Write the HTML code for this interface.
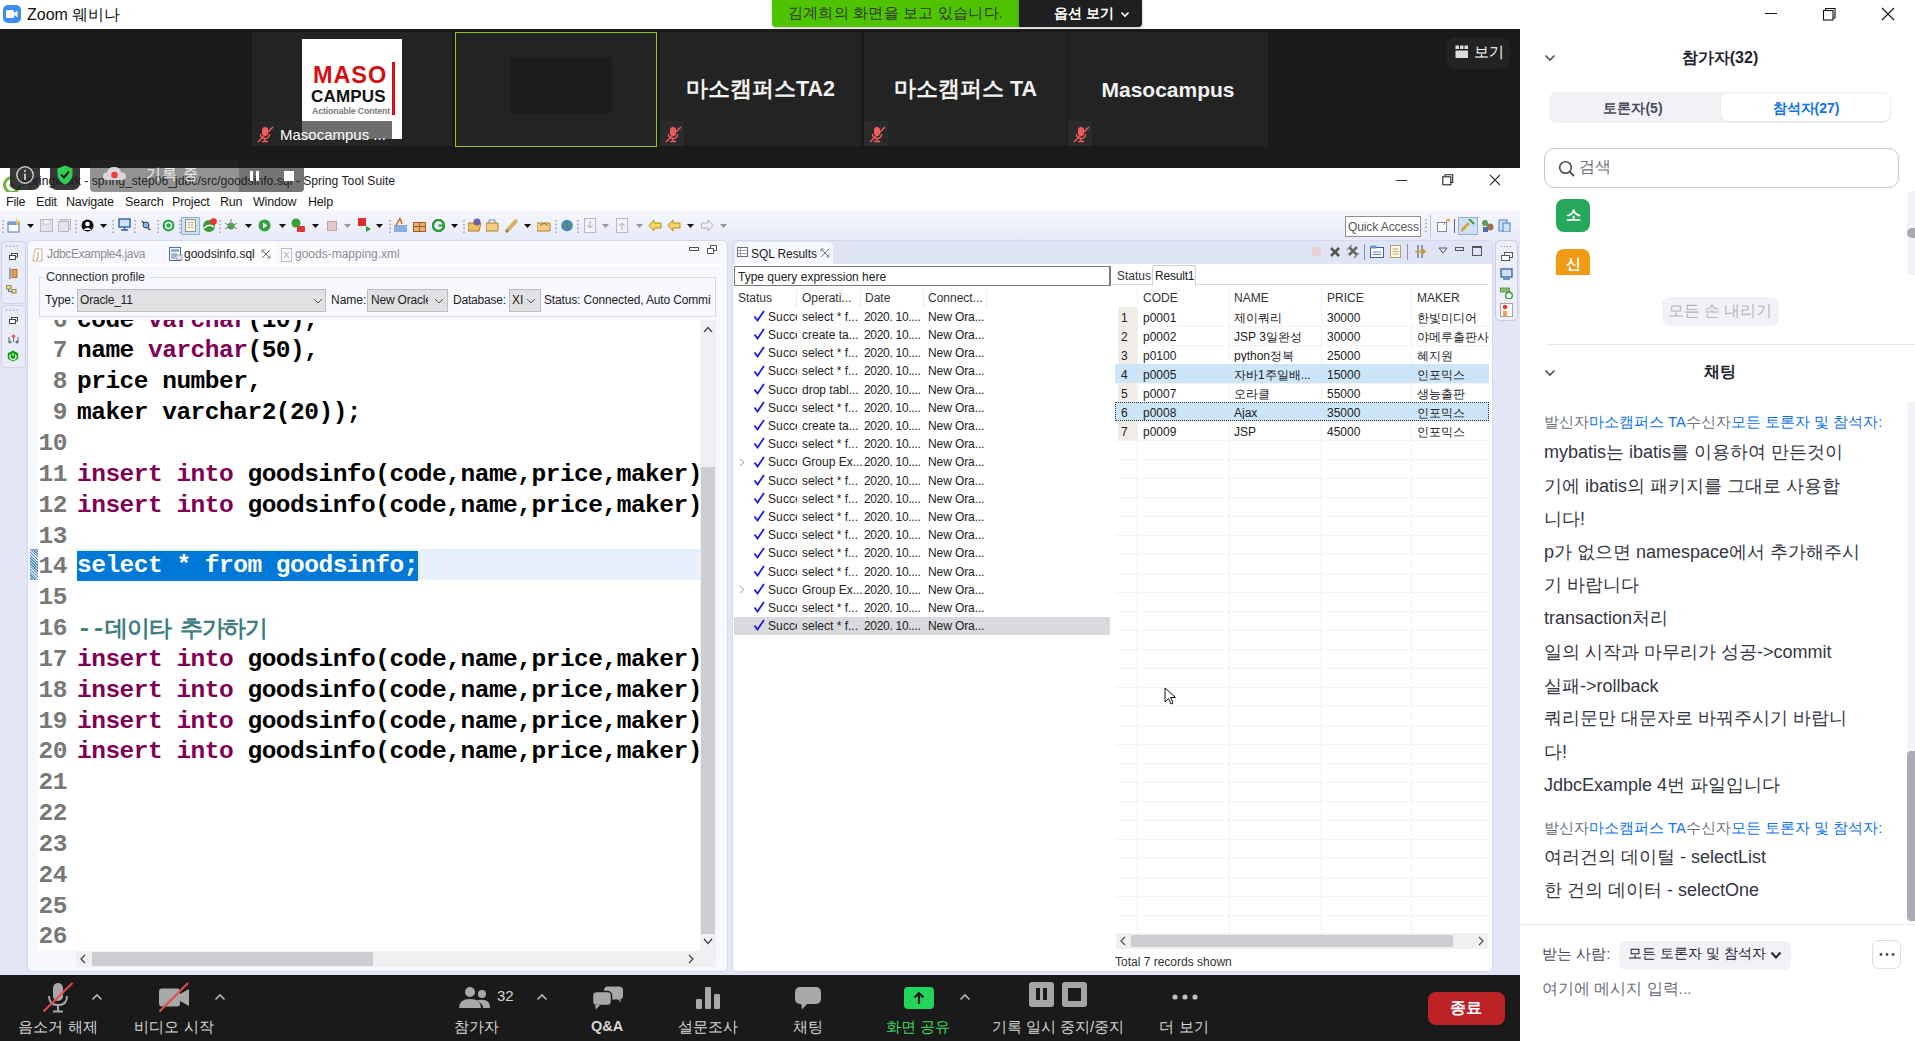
<!DOCTYPE html>
<html><head><meta charset="utf-8">
<style>
*{margin:0;padding:0;box-sizing:border-box}
html,body{width:1915px;height:1041px;overflow:hidden;background:#fff;font-family:"Liberation Sans",sans-serif;position:relative}
.a{position:absolute}
.t{position:absolute;white-space:nowrap}
/* title bar */
#title{left:0;top:0;width:1915px;height:29px;background:#fff}
/* video strip */
#strip{left:0;top:29px;width:1520px;height:139px;background:#1a1a1a}
.tile{position:absolute;top:3px;height:114px;background:#232323}
.mic{position:absolute;left:0;bottom:0;width:24px;height:25px;background:#2b2b2b}
.tname{position:absolute;left:0;right:0;top:44px;text-align:center;color:#f2f2f2;font-weight:bold;font-size:21px}
/* eclipse */
#ecl{left:0;top:168px;width:1520px;height:807px;background:#f5f6fb}
/* zoom bottom toolbar */
#zbar{left:0;top:975px;width:1520px;height:66px;background:#1a1a1a}
.zb{position:absolute;top:50px;color:#d8d8d8;font-size:15px;text-align:center;transform:translateX(-50%)}
/* right panel */
#rp{left:1520px;top:29px;width:395px;height:1012px;background:#fff}
.cl{position:absolute;left:0;height:31px;line-height:31px;white-space:pre;font-family:"Liberation Mono",monospace;font-weight:bold;font-size:24.5px;letter-spacing:-0.5px;color:#000}
.ln{position:absolute;left:0;width:37px;text-align:right;color:#787878}
.cx{position:absolute;left:47px}
</style></head><body>
<div id="title" class="a">
  <div class="a" style="left:3px;top:5px;width:18px;height:18px;border-radius:5px;background:#3a8cf8"></div>
  <svg class="a" style="left:6px;top:10px" width="12" height="8"><rect x="0" y="0" width="8" height="8" rx="1.5" fill="#fff"/><path d="M8 3 L11.5 0.5 V7.5 L8 5 Z" fill="#fff"/></svg>
  <div class="t" style="left:27px;top:5px;font-size:16px;color:#111">Zoom 웨비나</div>

  <div class="a" style="left:1765px;top:13px;width:12px;height:1.2px;background:#111"></div>
  <svg class="a" style="left:1822px;top:7px" width="15" height="14"><path d="M3.5 3.5 V1.5 H13 V11 H11" stroke="#111" stroke-width="1.1" fill="none"/><rect x="1.5" y="3.5" width="9.5" height="9.5" stroke="#111" stroke-width="1.1" fill="none"/></svg>
  <svg class="a" style="left:1881px;top:7px" width="14" height="14"><path d="M1 1L13 13M13 1L1 13" stroke="#111" stroke-width="1.1"/></svg>
  <div class="a" style="left:772px;top:0;width:247px;height:27px;background:#4ec300;border-radius:0 0 0 4px;box-shadow:0 1px 3px rgba(0,0,0,.25)"></div>
  <div class="t" style="left:788px;top:4px;font-size:15px;color:#333;letter-spacing:0.2px">김계희의 화면을 보고 있습니다.</div>
  <div class="a" style="left:1019px;top:0;width:123px;height:27px;background:#1f1f21;border-radius:0 0 4px 0;box-shadow:0 1px 3px rgba(0,0,0,.25)"></div>
  <div class="t" style="left:1054px;top:5px;font-size:14px;color:#fff;font-weight:bold">옵션 보기</div>
  <svg class="a" style="left:1120px;top:11px" width="10" height="7"><path d="M1.5 1.5L5 5L8.5 1.5" stroke="#fff" stroke-width="1.6" fill="none"/></svg>
</div>
<div id="strip" class="a">
  <div class="tile" style="left:252px;width:200px">
    <div class="a" style="left:50px;top:7px;width:100px;height:100px;background:#fff">
      <div class="t" style="left:11px;top:25.3px;font-size:23.5px;line-height:1;font-weight:bold;color:#d40f14;letter-spacing:0.9px">MASO</div>
      <div class="t" style="left:9px;top:48.5px;font-size:17px;line-height:1;font-weight:bold;color:#111;letter-spacing:0.2px">CAMPUS</div>
      <div class="t" style="left:10px;top:67.8px;font-size:8.8px;line-height:1;color:#7a7a7a;letter-spacing:-0.15px;font-weight:bold">Actionable Content</div>
      <div class="a" style="left:90px;top:23px;width:2.5px;height:53px;background:#d40f14"></div>
    </div>
    <div class="mic" style="width:140px;top:89px;height:25px;background:rgba(40,40,40,.68)"><svg class="a" style="left:5px;top:5px" width="17" height="17" viewBox="0 0 17 17"><rect x="5" y="1" width="6" height="9" rx="3" fill="#f25b5b"/><path d="M3.5 8 Q3.5 12.5 8 12.5 Q12.5 12.5 12.5 8" stroke="#f25b5b" stroke-width="1.4" fill="none"/><path d="M8 12.5V15M5 15.5H11" stroke="#f25b5b" stroke-width="1.4"/><path d="M1 16L16 1" stroke="#f25b5b" stroke-width="1.5"/></svg></div>
    <div class="t" style="left:28px;top:94px;color:#fff;font-size:15px">Masocampus ...</div>
  </div>
  <div class="a" style="left:455px;top:3px;width:202px;height:115px;border:1px solid #8fc31f;background:#232323">
    <div class="a" style="left:54px;top:24px;width:102px;height:56px;background:#1c1c1c"></div>
  </div>
    <div class="a" style="left:1446px;top:8px;width:64px;height:32px;border-radius:10px;background:#222"></div>
  <svg class="a" style="left:1455px;top:16px" width="14" height="14"><rect x="0.5" y="0.5" width="3.5" height="3.5" fill="#ddd"/><rect x="5" y="0.5" width="3.5" height="3.5" fill="#ddd"/><rect x="9.5" y="0.5" width="3.5" height="3.5" fill="#ddd"/><rect x="0.5" y="5.5" width="12.5" height="7.5" fill="#ddd"/></svg>
  <div class="t" style="left:1474px;top:14px;font-size:15px;color:#fff">보기</div>
<div class="tile" style="left:660px;width:201px"><div class="tname" style="top:42px;font-size:21.5px">마소캠퍼스TA2</div><div class="mic"><svg class="a" style="left:5px;top:5px" width="17" height="17" viewBox="0 0 17 17"><rect x="5" y="1" width="6" height="9" rx="3" fill="#f25b5b"/><path d="M3.5 8 Q3.5 12.5 8 12.5 Q12.5 12.5 12.5 8" stroke="#f25b5b" stroke-width="1.4" fill="none"/><path d="M8 12.5V15M5 15.5H11" stroke="#f25b5b" stroke-width="1.4"/><path d="M1 16L16 1" stroke="#f25b5b" stroke-width="1.5"/></svg></div></div>
  <div class="tile" style="left:864px;width:203px"><div class="tname" style="top:42px;font-size:21.5px">마소캠퍼스 TA</div><div class="mic"><svg class="a" style="left:5px;top:5px" width="17" height="17" viewBox="0 0 17 17"><rect x="5" y="1" width="6" height="9" rx="3" fill="#f25b5b"/><path d="M3.5 8 Q3.5 12.5 8 12.5 Q12.5 12.5 12.5 8" stroke="#f25b5b" stroke-width="1.4" fill="none"/><path d="M8 12.5V15M5 15.5H11" stroke="#f25b5b" stroke-width="1.4"/><path d="M1 16L16 1" stroke="#f25b5b" stroke-width="1.5"/></svg></div></div>
  <div class="tile" style="left:1068px;width:200px"><div class="tname" style="top:46px">Masocampus</div><div class="mic"><svg class="a" style="left:5px;top:5px" width="17" height="17" viewBox="0 0 17 17"><rect x="5" y="1" width="6" height="9" rx="3" fill="#f25b5b"/><path d="M3.5 8 Q3.5 12.5 8 12.5 Q12.5 12.5 12.5 8" stroke="#f25b5b" stroke-width="1.4" fill="none"/><path d="M8 12.5V15M5 15.5H11" stroke="#f25b5b" stroke-width="1.4"/><path d="M1 16L16 1" stroke="#f25b5b" stroke-width="1.5"/></svg></div></div>
</div>
<div id="ecl" class="a" style="background:#e4e6f6">
<div class="a" style="left:0px;top:0px;width:1520px;height:24px;background:#fff"></div>
<svg class="a" style="left:3px;top:8px" width="18" height="18"><path d="M9 1.5A7.5 7.5 0 1 0 16.5 9" fill="none" stroke="#6db33f" stroke-width="3"/><circle cx="9" cy="9" r="2.5" fill="#6db33f"/></svg>
<div class="t" style="left:22px;top:6.67px;font-size:12.2px;line-height:1;color:#222">springwork - spring_step06_jdbc/src/goodsinfo.sql - Spring Tool Suite</div>
<div class="a" style="left:1396px;top:12px;width:11px;height:1px;background:#333"></div>
<svg class="a" style="left:1442px;top:6px" width="12" height="12"><path d="M3 2.5V0.8H10.7V8.5H9" stroke="#222" stroke-width="1.1" fill="none"/><rect x="0.8" y="2.8" width="8" height="8" stroke="#222" stroke-width="1.1" fill="none"/></svg>
<svg class="a" style="left:1489px;top:6px" width="12" height="12"><path d="M1 1L11 11M11 1L1 11" stroke="#333" stroke-width="1.1"/></svg>
<div class="a" style="left:0px;top:24px;width:1520px;height:18px;background:#fff"></div>
<div class="t" style="left:6px;top:28.42px;font-size:12.5px;line-height:1;color:#1a1a1a;letter-spacing:-0.2px">File</div>
<div class="t" style="left:36px;top:28.42px;font-size:12.5px;line-height:1;color:#1a1a1a;letter-spacing:-0.2px">Edit</div>
<div class="t" style="left:66px;top:28.42px;font-size:12.5px;line-height:1;color:#1a1a1a;letter-spacing:-0.2px">Navigate</div>
<div class="t" style="left:125px;top:28.42px;font-size:12.5px;line-height:1;color:#1a1a1a;letter-spacing:-0.2px">Search</div>
<div class="t" style="left:172px;top:28.42px;font-size:12.5px;line-height:1;color:#1a1a1a;letter-spacing:-0.2px">Project</div>
<div class="t" style="left:220px;top:28.42px;font-size:12.5px;line-height:1;color:#1a1a1a;letter-spacing:-0.2px">Run</div>
<div class="t" style="left:253px;top:28.42px;font-size:12.5px;line-height:1;color:#1a1a1a;letter-spacing:-0.2px">Window</div>
<div class="t" style="left:308px;top:28.42px;font-size:12.5px;line-height:1;color:#1a1a1a;letter-spacing:-0.2px">Help</div>
<div class="a" style="left:0px;top:42px;width:1520px;height:31px;background:linear-gradient(#f6f7fd,#e7e9f7)"></div>
<div class="a" style="left:1345px;top:48px;width:76px;height:21px;border:1px solid #8f8f8f;background:#fff"></div>
<div class="t" style="left:1348px;top:52.84px;font-size:12px;line-height:1;color:#555;letter-spacing:-0.1px">Quick Access</div>
<div class="a" style="left:1px;top:73px;width:25px;height:63px;border:1px solid #cdd0e6;border-radius:5px;background:#e9ebf8"></div>
<div class="a" style="left:1px;top:137px;width:25px;height:63px;border:1px solid #cdd0e6;border-radius:5px;background:#e9ebf8"></div>
<svg class="a" style="left:6px;top:77px" width="14" height="2"><path d="M0 1H14" stroke="#777" stroke-dasharray="1.2 2.4"/></svg>
<svg class="a" style="left:6px;top:141px" width="14" height="2"><path d="M0 1H14" stroke="#777" stroke-dasharray="1.2 2.4"/></svg>
<svg class="a" style="left:9px;top:85px" width="9" height="7"><rect x="2.5" y="0.5" width="6" height="3.5" fill="#fff" stroke="#444"/><rect x="0.5" y="2.5" width="6" height="4" fill="#fff" stroke="#444"/></svg>
<svg class="a" style="left:9px;top:149px" width="9" height="7"><rect x="2.5" y="0.5" width="6" height="3.5" fill="#fff" stroke="#444"/><rect x="0.5" y="2.5" width="6" height="4" fill="#fff" stroke="#444"/></svg>
<svg class="a" style="left:9px;top:100px" width="9" height="11"><path d="M1 0V11" stroke="#667" stroke-width="1.2"/><rect x="3" y="1.5" width="5" height="8" fill="#e0a050" stroke="#a06020" stroke-width="0.8"/></svg>
<svg class="a" style="left:6px;top:117px" width="13" height="9"><rect x="0.5" y="0.5" width="4.5" height="3.5" fill="#f0e060" stroke="#887"/><rect x="6" y="4.5" width="4" height="3.5" fill="#f0e060" stroke="#887"/><path d="M2.5 4V6.5H6" stroke="#667" fill="none"/></svg>
<svg class="a" style="left:8px;top:166px" width="11" height="10"><circle cx="5.5" cy="2.2" r="1.8" fill="#e06060"/><path d="M1 3V8M10 3V8M5.5 4V8" stroke="#667"/><circle cx="2" cy="8" r="1.6" fill="#5a8a5a"/><circle cx="9" cy="8" r="1.6" fill="#5a70b0"/></svg>
<svg class="a" style="left:7px;top:182px" width="12" height="12"><path d="M6 0.5L11.2 3.3V8.7L6 11.5L0.8 8.7V3.3Z" fill="#109a10"/><path d="M3.8 4.5A3 3 0 1 0 8.2 4.5" stroke="#fff" stroke-width="1.1" fill="none"/><path d="M6 3V6" stroke="#fff" stroke-width="1.1"/></svg>
<div class="a" style="left:27px;top:72px;width:701px;height:732px;background:#f7f8fd;border:1px solid #d6d9ee;border-radius:5px"></div>
<div class="a" style="left:166px;top:73px;width:111px;height:24px;background:#fcfcff;border-radius:5px 5px 0 0"></div>
<svg class="a" style="left:32px;top:80px" width="11" height="14"><path d="M1 13L3 1H10V13Z" fill="#fff" stroke="#c0a070" stroke-width="0.8"/><path d="M6 4V10Q6 12 4 11" stroke="#b09060" fill="none"/></svg>
<div class="t" style="left:47px;top:79.84px;font-size:12px;line-height:1;color:#8f8f8f;letter-spacing:-0.35px">JdbcExample4.java</div>
<svg class="a" style="left:169px;top:79px" width="14" height="14"><rect x="0.5" y="0.5" width="11" height="13" fill="#fff" stroke="#4a70b0"/><rect x="2" y="2" width="8" height="3" fill="#8ab0e0"/><path d="M2 7H8M2 9H8M2 11H6" stroke="#4a70b0"/><rect x="7" y="8" width="6" height="5" fill="#e0e8f0" stroke="#666" stroke-width="0.6"/></svg>
<div class="t" style="left:184px;top:79.84px;font-size:12px;line-height:1;color:#222">goodsinfo.sql</div>
<svg class="a" style="left:261px;top:81px" width="10" height="10"><path d="M1 1L9 9M9 1L1 9" stroke="#777" stroke-width="1"/><path d="M1 1H4M1 1V4M9 9H6M9 9V6" stroke="#777" stroke-width="0.8"/></svg>
<svg class="a" style="left:281px;top:80px" width="11" height="14"><rect x="0.5" y="0.5" width="10" height="13" fill="#fff" stroke="#b8b8c8"/><path d="M3 4L8 10M8 4L3 10" stroke="#a0a0b0"/></svg>
<div class="t" style="left:295px;top:79.84px;font-size:12px;line-height:1;color:#8f8f8f">goods-mapping.xml</div>
<div class="a" style="left:689px;top:79px;width:10px;height:4px;border:1px solid #555"></div>
<svg class="a" style="left:707px;top:77px" width="10" height="9"><rect x="3.5" y="0.5" width="6" height="5" fill="#fff" stroke="#555"/><rect x="0.5" y="3.5" width="6" height="5" fill="#fff" stroke="#555"/></svg>
<div class="a" style="left:38px;top:96px;width:684px;height:2px;background:#fdfdff"></div>
<div class="a" style="left:39px;top:109px;width:677px;height:40px;border:1px solid #d8d9e4"></div>
<div class="a" style="left:44px;top:104px;width:106px;height:12px;background:#f7f8fd"></div>
<div class="t" style="left:46px;top:103.42px;font-size:12.5px;line-height:1;color:#333;letter-spacing:-0.1px">Connection profile</div>
<div class="t" style="left:45px;top:126.34px;font-size:12px;line-height:1;color:#222">Type:</div>
<div class="a" style="left:77px;top:121px;width:249px;height:23px;background:#e1e1e4;border:1px solid #bdbdc3"></div>
<div class="t" style="left:80px;top:126.34px;font-size:12px;line-height:1;color:#222;letter-spacing:-0.2px">Oracle_11</div>
<svg class="a" style="left:313px;top:130px" width="10" height="6"><path d="M1 1L5 5L9 1" stroke="#555" fill="none"/></svg>
<div class="t" style="left:331px;top:126.34px;font-size:12px;line-height:1;color:#222">Name:</div>
<div class="a" style="left:367px;top:121px;width:81px;height:23px;background:#e1e1e4;border:1px solid #bdbdc3"></div>
<div class="t" style="left:371px;top:126.34px;font-size:12px;line-height:1;color:#222;width:57px;overflow:hidden;letter-spacing:-0.2px">New Oracle</div>
<svg class="a" style="left:434px;top:130px" width="10" height="6"><path d="M1 1L5 5L9 1" stroke="#555" fill="none"/></svg>
<div class="t" style="left:453px;top:126.34px;font-size:12px;line-height:1;color:#222;letter-spacing:-0.2px">Database:</div>
<div class="a" style="left:509px;top:121px;width:32px;height:23px;background:#e1e1e4;border:1px solid #bdbdc3"></div>
<div class="t" style="left:512px;top:126.34px;font-size:12px;line-height:1;color:#222">XI</div>
<svg class="a" style="left:526px;top:130px" width="10" height="6"><path d="M1 1L5 5L9 1" stroke="#555" fill="none"/></svg>
<div class="t" style="left:544px;top:126.34px;font-size:12px;line-height:1;color:#222;width:167px;overflow:hidden;letter-spacing:-0.15px">Status: Connected, Auto Commit</div>
<div class="a" style="left:38px;top:152px;width:678px;height:631px;background:#fff"></div>
<div id="code" class="a" style="left:30px;top:152px;width:670px;height:631px;overflow:hidden"><div class="cl" style="top:-15.4px"><span class="ln">6</span><span class="cx">code <span style="color:#7f0055">varchar</span>(10),</span></div>
<div class="cl" style="top:15.4px"><span class="ln">7</span><span class="cx">name <span style="color:#7f0055">varchar</span>(50),</span></div>
<div class="cl" style="top:46.3px"><span class="ln">8</span><span class="cx">price number,</span></div>
<div class="cl" style="top:77.1px"><span class="ln">9</span><span class="cx">maker varchar2(20));</span></div>
<div class="cl" style="top:108.0px"><span class="ln">10</span><span class="cx"></span></div>
<div class="cl" style="top:138.8px"><span class="ln">11</span><span class="cx"><span style="color:#7f0055">insert</span> <span style="color:#7f0055">into</span> goodsinfo(code,name,price,maker)</span></div>
<div class="cl" style="top:169.6px"><span class="ln">12</span><span class="cx"><span style="color:#7f0055">insert</span> <span style="color:#7f0055">into</span> goodsinfo(code,name,price,maker)</span></div>
<div class="cl" style="top:200.5px"><span class="ln">13</span><span class="cx"></span></div>
<div class="a" style="left:47px;top:229px;width:623px;height:31px;background:#e8f0fb"></div>
<div class="a" style="left:-1px;top:229px;width:9px;height:31px;background:repeating-linear-gradient(45deg,#5a8fc8 0 1px,#cfe0f2 1px 2px)"></div>
<div class="cl" style="top:231.3px"><span class="ln">14</span><span class="cx"><span style="background:#0078d7;color:#fff;display:inline-block;height:30px;line-height:30px;vertical-align:top;padding:0">select * from goodsinfo;</span></span></div>
<div class="cl" style="top:262.2px"><span class="ln">15</span><span class="cx"></span></div>
<div class="cl" style="top:293.0px"><span class="ln">16</span><span class="cx"><span style="color:#3f7f7f">--</span><span style="color:#3f7f7f;font-weight:bold;font-family:'Liberation Sans',sans-serif;letter-spacing:-1.4px;word-spacing:5px;font-size:23px">데이타 추가하기</span></span></div>
<div class="cl" style="top:323.8px"><span class="ln">17</span><span class="cx"><span style="color:#7f0055">insert</span> <span style="color:#7f0055">into</span> goodsinfo(code,name,price,maker)</span></div>
<div class="cl" style="top:354.7px"><span class="ln">18</span><span class="cx"><span style="color:#7f0055">insert</span> <span style="color:#7f0055">into</span> goodsinfo(code,name,price,maker)</span></div>
<div class="cl" style="top:385.5px"><span class="ln">19</span><span class="cx"><span style="color:#7f0055">insert</span> <span style="color:#7f0055">into</span> goodsinfo(code,name,price,maker)</span></div>
<div class="cl" style="top:416.4px"><span class="ln">20</span><span class="cx"><span style="color:#7f0055">insert</span> <span style="color:#7f0055">into</span> goodsinfo(code,name,price,maker)</span></div>
<div class="cl" style="top:447.2px"><span class="ln">21</span><span class="cx"></span></div>
<div class="cl" style="top:478.0px"><span class="ln">22</span><span class="cx"></span></div>
<div class="cl" style="top:508.9px"><span class="ln">23</span><span class="cx"></span></div>
<div class="cl" style="top:539.7px"><span class="ln">24</span><span class="cx"></span></div>
<div class="cl" style="top:570.6px"><span class="ln">25</span><span class="cx"></span></div>
<div class="cl" style="top:601.4px"><span class="ln">26</span><span class="cx"></span></div></div>
<div class="a" style="left:700px;top:152px;width:16px;height:631px;background:#f0f0f3"></div>
<div class="a" style="left:701px;top:299px;width:14px;height:467px;background:#cdcdd2"></div>
<svg class="a" style="left:703px;top:158px" width="10" height="7"><path d="M1 6L5 1.5L9 6" stroke="#444" stroke-width="1.3" fill="none"/></svg>
<svg class="a" style="left:703px;top:770px" width="10" height="7"><path d="M1 1L5 5.5L9 1" stroke="#444" stroke-width="1.3" fill="none"/></svg>
<div class="a" style="left:76px;top:783px;width:624px;height:16px;background:#f0f0f3"></div>
<div class="a" style="left:92px;top:784px;width:281px;height:14px;background:#cdcdd2"></div>
<svg class="a" style="left:79px;top:786px" width="8" height="10"><path d="M6 1L2 5L6 9" stroke="#444" stroke-width="1.3" fill="none"/></svg>
<svg class="a" style="left:687px;top:786px" width="8" height="10"><path d="M2 1L6 5L2 9" stroke="#444" stroke-width="1.3" fill="none"/></svg>
<div class="a" style="left:700px;top:783px;width:16px;height:16px;background:#f0f0f3"></div>
<div class="a" style="left:732px;top:72px;width:761px;height:732px;background:#fff;border:1px solid #d6d9ee;border-radius:5px"></div>
<div class="a" style="left:733px;top:73px;width:759px;height:23px;background:#dfe5f4;border-radius:5px 5px 0 0"></div>
<div class="a" style="left:735px;top:74px;width:98px;height:22px;background:#f7f8fd;border-radius:5px 5px 0 0"></div>
<svg class="a" style="left:737px;top:79px" width="11" height="10"><rect x="0.5" y="0.5" width="10" height="9" fill="#fff" stroke="#667"/><path d="M0.5 3.5H10.5M0.5 6.5H10.5M3.5 0.5V9.5" stroke="#889" stroke-width="0.8"/></svg>
<div class="t" style="left:751px;top:79.84px;font-size:12px;line-height:1;color:#222;letter-spacing:-0.1px">SQL Results</div>
<svg class="a" style="left:820px;top:80px" width="10" height="10"><path d="M1 1L9 9M9 1L1 9" stroke="#777" stroke-width="1"/><path d="M1 1H4M1 1V4M9 9H6M9 9V6" stroke="#777" stroke-width="0.8"/></svg>
<svg class="a" style="left:1312px;top:79px" width="10" height="9"><rect x="0" y="0" width="9" height="9" fill="#e8d0d0"/></svg>
<svg class="a" style="left:1329px;top:78px" width="12" height="12"><path d="M2 2L10 10M10 2L2 10" stroke="#555" stroke-width="2.6"/></svg>
<svg class="a" style="left:1346px;top:76px" width="14" height="15"><path d="M3 3L11 11M11 3L3 11" stroke="#666" stroke-width="2.6"/><path d="M1 6L6 1M8 14L13 9" stroke="#888" stroke-width="1.2"/></svg>
<div class="a" style="left:1364px;top:76px;width:1px;height:16px;background:#8a90a8"></div>
<svg class="a" style="left:1370px;top:77px" width="14" height="13"><rect x="0.5" y="2.5" width="13" height="10" fill="#fff" stroke="#3a60a0"/><rect x="0.5" y="0.5" width="6" height="3" fill="#6a90d0"/><path d="M3 7H11M3 9.5H11" stroke="#3a60a0" stroke-width="0.8"/></svg>
<svg class="a" style="left:1390px;top:77px" width="11" height="13"><rect x="0.5" y="0.5" width="10" height="12" fill="#fffbe8" stroke="#b0a070"/><path d="M2.5 4H8.5M2.5 6.5H8.5M2.5 9H8.5" stroke="#a09060" stroke-width="0.8"/></svg>
<div class="a" style="left:1407px;top:76px;width:1px;height:16px;background:#8a90a8"></div>
<svg class="a" style="left:1413px;top:77px" width="14" height="13"><path d="M5 0V13M9 0V13" stroke="#446" stroke-width="1"/><path d="M2 6.5H12M9 3.5L12 6.5L9 9.5" stroke="#c8a030" stroke-width="1.6" fill="none"/></svg>
<svg class="a" style="left:1438px;top:79px" width="10" height="7"><path d="M1 1H9L5 6Z" fill="none" stroke="#556"/></svg>
<div class="a" style="left:1455px;top:79px;width:9px;height:4px;border:1px solid #555"></div>
<div class="a" style="left:1472px;top:78px;width:10px;height:10px;border:1px solid #555;border-top-width:2px"></div>
<div class="a" style="left:1495px;top:72px;width:23px;height:81px;border:1px solid #c8cbe3;border-radius:5px;background:#eceef9"></div>
<svg class="a" style="left:1501px;top:77px" width="12" height="3"><path d="M0 1.5H12" stroke="#888" stroke-dasharray="1 2"/></svg>
<svg class="a" style="left:1501px;top:84px" width="12" height="10"><rect x="3.5" y="0.5" width="8" height="5" fill="#fff" stroke="#555"/><rect x="0.5" y="3.5" width="8" height="5" fill="#fff" stroke="#555"/></svg>
<svg class="a" style="left:1500px;top:100px" width="13" height="12"><rect x="1" y="1" width="11" height="8" fill="#cfe0f5" stroke="#2f5ea8" stroke-width="1.3"/><path d="M3 11H10" stroke="#2f5ea8" stroke-width="1.3"/></svg>
<svg class="a" style="left:1500px;top:119px" width="13" height="12"><rect x="0.5" y="1" width="9" height="4" fill="#8ac070" stroke="#4a8a3a" stroke-width="0.8"/><circle cx="9" cy="8.5" r="3.3" fill="#fff" stroke="#3a9a3a" stroke-width="1.4"/></svg>
<svg class="a" style="left:1500px;top:135px" width="13" height="14"><rect x="0.5" y="0.5" width="12" height="13" fill="#fff" stroke="#b0a090"/><circle cx="5" cy="4" r="2.3" fill="#e33"/><rect x="3" y="8" width="4" height="5" fill="#e8a050"/></svg>
</div>
<div id="tbicons"><svg class="a" style="left:2px;top:220px" width="2" height="13"><path d="M1 0V13" stroke="#8a8aa0" stroke-width="1.2" stroke-dasharray="1.5 2.3"/></svg>
<svg class="a" style="left:75px;top:220px" width="2" height="13"><path d="M1 0V13" stroke="#8a8aa0" stroke-width="1.2" stroke-dasharray="1.5 2.3"/></svg>
<svg class="a" style="left:112px;top:220px" width="2" height="13"><path d="M1 0V13" stroke="#8a8aa0" stroke-width="1.2" stroke-dasharray="1.5 2.3"/></svg>
<svg class="a" style="left:134px;top:220px" width="2" height="13"><path d="M1 0V13" stroke="#8a8aa0" stroke-width="1.2" stroke-dasharray="1.5 2.3"/></svg>
<svg class="a" style="left:157px;top:220px" width="2" height="13"><path d="M1 0V13" stroke="#8a8aa0" stroke-width="1.2" stroke-dasharray="1.5 2.3"/></svg>
<svg class="a" style="left:179px;top:220px" width="2" height="13"><path d="M1 0V13" stroke="#8a8aa0" stroke-width="1.2" stroke-dasharray="1.5 2.3"/></svg>
<svg class="a" style="left:219px;top:220px" width="2" height="13"><path d="M1 0V13" stroke="#8a8aa0" stroke-width="1.2" stroke-dasharray="1.5 2.3"/></svg>
<svg class="a" style="left:389px;top:220px" width="2" height="13"><path d="M1 0V13" stroke="#8a8aa0" stroke-width="1.2" stroke-dasharray="1.5 2.3"/></svg>
<svg class="a" style="left:463px;top:220px" width="2" height="13"><path d="M1 0V13" stroke="#8a8aa0" stroke-width="1.2" stroke-dasharray="1.5 2.3"/></svg>
<svg class="a" style="left:555px;top:220px" width="2" height="13"><path d="M1 0V13" stroke="#8a8aa0" stroke-width="1.2" stroke-dasharray="1.5 2.3"/></svg>
<svg class="a" style="left:577px;top:220px" width="2" height="13"><path d="M1 0V13" stroke="#8a8aa0" stroke-width="1.2" stroke-dasharray="1.5 2.3"/></svg>
<svg class="a" style="left:27px;top:224px" width="8" height="5"><path d="M0 0H7L3.5 4Z" fill="#111"/></svg>
<svg class="a" style="left:100px;top:224px" width="8" height="5"><path d="M0 0H7L3.5 4Z" fill="#111"/></svg>
<svg class="a" style="left:245px;top:224px" width="8" height="5"><path d="M0 0H7L3.5 4Z" fill="#111"/></svg>
<svg class="a" style="left:279px;top:224px" width="8" height="5"><path d="M0 0H7L3.5 4Z" fill="#111"/></svg>
<svg class="a" style="left:312px;top:224px" width="8" height="5"><path d="M0 0H7L3.5 4Z" fill="#111"/></svg>
<svg class="a" style="left:376px;top:224px" width="8" height="5"><path d="M0 0H7L3.5 4Z" fill="#111"/></svg>
<svg class="a" style="left:451px;top:224px" width="8" height="5"><path d="M0 0H7L3.5 4Z" fill="#111"/></svg>
<svg class="a" style="left:524px;top:224px" width="8" height="5"><path d="M0 0H7L3.5 4Z" fill="#111"/></svg>
<svg class="a" style="left:687px;top:224px" width="8" height="5"><path d="M0 0H7L3.5 4Z" fill="#111"/></svg>
<svg class="a" style="left:344px;top:224px" width="8" height="5"><path d="M0 0H7L3.5 4Z" fill="#999"/></svg>
<svg class="a" style="left:602px;top:224px" width="8" height="5"><path d="M0 0H7L3.5 4Z" fill="#999"/></svg>
<svg class="a" style="left:636px;top:224px" width="8" height="5"><path d="M0 0H7L3.5 4Z" fill="#999"/></svg>
<svg class="a" style="left:720px;top:224px" width="8" height="5"><path d="M0 0H7L3.5 4Z" fill="#999"/></svg>
<svg class="a" style="left:7px;top:218px" width="14" height="15"><rect x="1" y="4" width="11" height="10" fill="#fff" stroke="#4a78b8"/><rect x="1" y="4" width="11" height="3" fill="#6ea0d8"/><path d="M9 0L10.5 3L13.5 3.5L11 5.5L11.5 8L9 6.5" fill="#f0c040"/></svg>
<svg class="a" style="left:40px;top:219px" width="13" height="13"><rect x="0.5" y="0.5" width="12" height="12" fill="#e4e4ea" stroke="#b8b8c4"/><rect x="3" y="1" width="7" height="4" fill="#fff" stroke="#c0c0c8"/></svg>
<svg class="a" style="left:58px;top:219px" width="13" height="13"><rect x="2.5" y="0.5" width="10" height="10" fill="#e4e4ea" stroke="#b8b8c4"/><rect x="0.5" y="2.5" width="10" height="10" fill="#e4e4ea" stroke="#b8b8c4"/></svg>
<svg class="a" style="left:81px;top:219px" width="13" height="13"><circle cx="6.5" cy="6.5" r="6" fill="#111"/><circle cx="6.5" cy="5" r="2.3" fill="#fff"/><path d="M2.5 11Q6.5 6.5 10.5 11" fill="#fff"/></svg>
<svg class="a" style="left:118px;top:218px" width="13" height="14"><rect x="1" y="1" width="11" height="8" fill="#cfe0f5" stroke="#2f5ea8" stroke-width="1.4"/><path d="M3 12H10M6.5 9V12" stroke="#2f5ea8" stroke-width="1.4"/></svg>
<svg class="a" style="left:140px;top:219px" width="12" height="13"><path d="M2 2L10 11" stroke="#345" stroke-width="1.5"/><circle cx="6" cy="6" r="3" fill="#8ab4e0" stroke="#345"/></svg>
<svg class="a" style="left:162px;top:219px" width="13" height="13"><circle cx="6.5" cy="6.5" r="6" fill="#2ea44f"/><circle cx="6.5" cy="6.5" r="3" fill="none" stroke="#fff" stroke-width="1.3"/></svg>
<div class="a" style="left:181px;top:217px;width:19px;height:18px;background:#cfe0f5;border:1px solid #90b0dc"></div>
<svg class="a" style="left:185px;top:219px" width="11" height="13"><rect x="0.5" y="0.5" width="10" height="12" fill="#fbf6e2" stroke="#9a9080"/><path d="M4 3V10M7 3V10" stroke="#555" stroke-dasharray="1 1.5"/></svg>
<svg class="a" style="left:202px;top:218px" width="15" height="15"><circle cx="7" cy="8" r="6" fill="#3a9a3a"/><path d="M2 10Q7 5 12 9" stroke="#fff" stroke-width="1.5" fill="none"/><circle cx="11.5" cy="3.5" r="3.3" fill="#e33"/></svg>
<svg class="a" style="left:225px;top:219px" width="12" height="13"><circle cx="6" cy="7" r="3.5" fill="#5a9a5a"/><path d="M0 4L3 6M12 4L9 6M0 10L3 8M12 10L9 8M6 0V3" stroke="#5a8a5a"/></svg>
<svg class="a" style="left:258px;top:219px" width="13" height="13"><circle cx="6.5" cy="6.5" r="6" fill="#33a23a"/><path d="M5 3.5L9.5 6.5L5 9.5Z" fill="#fff"/></svg>
<svg class="a" style="left:291px;top:218px" width="14" height="15"><circle cx="5" cy="5" r="4.5" fill="#33a23a"/><rect x="6" y="8" width="8" height="6" rx="1" fill="#d33"/></svg>
<svg class="a" style="left:327px;top:221px" width="10" height="10"><rect x="0.5" y="0.5" width="9" height="9" fill="#e6c8c8" stroke="#c8a0a0"/></svg>
<svg class="a" style="left:358px;top:218px" width="14" height="15"><rect x="0" y="0" width="8" height="8" fill="#d83030"/><path d="M8 8L13 11L8 14Z" fill="#3a9a3a"/></svg>
<svg class="a" style="left:394px;top:218px" width="14" height="15"><path d="M0 7H13V14H0Z" fill="#8ab0e0"/><path d="M2 8L6 0L8 6" stroke="#e06020" stroke-width="1.5" fill="none"/></svg>
<svg class="a" style="left:413px;top:219px" width="13" height="13"><rect x="0.5" y="3.5" width="12" height="9" fill="#e8b070" stroke="#a06020"/><path d="M6.5 3V12.5M0.5 7.5H12.5" stroke="#a06020"/></svg>
<svg class="a" style="left:432px;top:219px" width="13" height="13"><circle cx="6.5" cy="6.5" r="5.5" fill="none" stroke="#2a9a3a" stroke-width="2.5"/><path d="M6.5 6.5H11" stroke="#2a9a3a" stroke-width="2"/></svg>
<svg class="a" style="left:468px;top:218px" width="14" height="14"><path d="M0 5H13L11 13H0Z" fill="#f0c060" stroke="#b08030"/><circle cx="9" cy="4" r="3.5" fill="#7060b0"/></svg>
<svg class="a" style="left:486px;top:219px" width="13" height="13"><path d="M0 4H12V12H0Z" fill="#f3d080" stroke="#b08030"/><path d="M3 4V1H9V4" stroke="#7a8aa8" fill="none"/></svg>
<svg class="a" style="left:505px;top:218px" width="13" height="15"><path d="M1 14L12 2" stroke="#d8b060" stroke-width="4"/><path d="M1 14L3 12" stroke="#777" stroke-width="2"/></svg>
<svg class="a" style="left:537px;top:219px" width="14" height="13"><path d="M0 4H13V12H0Z" fill="#f3d080" stroke="#b08030"/><path d="M3 7Q7 2 11 7" stroke="#a06020" fill="none"/></svg>
<svg class="a" style="left:561px;top:219px" width="12" height="13"><circle cx="6" cy="6.5" r="5.8" fill="#4a80c8"/><path d="M2 4Q5 6 4 10M8 2Q7 6 10 8" stroke="#5aa04a" stroke-width="2" fill="none"/></svg>
<svg class="a" style="left:584px;top:218px" width="12" height="15"><rect x="0.5" y="0.5" width="11" height="14" fill="#f4f4f8" stroke="#b8b8c8"/><path d="M6 3V10M3 7L6 10L9 7" stroke="#aaa" fill="none"/></svg>
<svg class="a" style="left:616px;top:218px" width="12" height="15"><rect x="0.5" y="0.5" width="11" height="14" fill="#f4f4f8" stroke="#b8b8c8"/><path d="M6 12V5M3 8L6 5L9 8" stroke="#aaa" fill="none"/></svg>
<svg class="a" style="left:648px;top:219px" width="14" height="13"><path d="M6 1L1 6.5L6 12V9H13V4H6Z" fill="#f5d860" stroke="#b09020"/></svg>
<svg class="a" style="left:667px;top:219px" width="14" height="13"><path d="M6 1L1 6.5L6 12V9H13V4H6Z" fill="#f5d860" stroke="#b09020"/></svg>
<svg class="a" style="left:701px;top:219px" width="13" height="13"><path d="M7 1L12 6.5L7 12V9H0.5V4H7Z" fill="#f0f0f4" stroke="#b0b0c0"/></svg>
<svg class="a" style="left:1425px;top:219px" width="2" height="15"><path d="M1 0V15" stroke="#8a8aa0" stroke-width="1.2" stroke-dasharray="1.5 2.3"/></svg><div class="a" style="left:1430px;top:214px;width:1px;height:24px;background:#c8c8d8"></div>
<div class="a" style="left:1454px;top:219px;width:1px;height:14px;background:#606070"></div>
<svg class="a" style="left:1437px;top:219px" width="13" height="13"><rect x="0.5" y="3.5" width="9" height="9" fill="#fff" stroke="#7a8aa8"/><path d="M6 6L12 0M9 0H12V3" stroke="#e08020" fill="none"/></svg>
<div class="a" style="left:1458px;top:217px;width:20px;height:18px;background:#cfe0f5;border:1px solid #90b0dc"></div>
<svg class="a" style="left:1461px;top:219px" width="14" height="13"><path d="M0 12L8 4" stroke="#d8a040" stroke-width="3"/><path d="M8 0L13 5" stroke="#3a9a3a" stroke-width="2"/></svg>
<svg class="a" style="left:1481px;top:219px" width="13" height="13"><circle cx="4" cy="4" r="3" fill="#5a9a5a"/><circle cx="9" cy="8" r="3.5" fill="#a07050"/><rect x="2" y="8" width="5" height="5" fill="#4a70b0"/></svg>
<svg class="a" style="left:1498px;top:219px" width="13" height="13"><rect x="1" y="1" width="8" height="11" fill="#cfe0f5" stroke="#4a80c8"/><rect x="5" y="4" width="7" height="9" fill="#cfe0f5" stroke="#4a80c8"/></svg></div>
<div id="sqlp"><div class="a" style="left:734px;top:266px;width:376px;height:20px;background:#fff;border:1px solid #7a7a7a"></div>
<div class="t" style="left:738px;top:270.84px;font-size:12px;line-height:1;color:#222">Type query expression here</div>
<div class="t" style="left:738px;top:291.84px;font-size:12px;line-height:1;color:#333">Status</div>
<div class="t" style="left:802px;top:291.84px;font-size:12px;line-height:1;color:#333">Operati...</div>
<div class="t" style="left:865px;top:291.84px;font-size:12px;line-height:1;color:#333">Date</div>
<div class="t" style="left:928px;top:291.84px;font-size:12px;line-height:1;color:#333">Connect...</div>
<div class="a" style="left:796px;top:290px;width:1px;height:18px;background:#ececf0"></div>
<div class="a" style="left:860px;top:290px;width:1px;height:18px;background:#ececf0"></div>
<div class="a" style="left:923px;top:290px;width:1px;height:18px;background:#ececf0"></div>
<div class="a" style="left:986px;top:290px;width:1px;height:18px;background:#ececf0"></div>
<svg class="a" style="left:753px;top:310.0px" width="12" height="12"><path d="M1.5 6.5L4.5 10.5L11 1" stroke="#1a1ae6" fill="none" stroke-width="1.8"/></svg>
<div class="t" style="left:768px;top:310.84px;font-size:12px;line-height:1;color:#222;width:29px;overflow:hidden;letter-spacing:0.1px">Success</div>
<div class="t" style="left:802px;top:310.84px;font-size:12px;line-height:1;color:#222">select * f...</div>
<div class="t" style="left:864px;top:310.84px;font-size:12px;line-height:1;color:#222;letter-spacing:-0.3px">2020. 10....</div>
<div class="t" style="left:928px;top:310.84px;font-size:12px;line-height:1;color:#222;letter-spacing:-0.1px">New Ora...</div>
<svg class="a" style="left:753px;top:328.2px" width="12" height="12"><path d="M1.5 6.5L4.5 10.5L11 1" stroke="#1a1ae6" fill="none" stroke-width="1.8"/></svg>
<div class="t" style="left:768px;top:329.04px;font-size:12px;line-height:1;color:#222;width:29px;overflow:hidden;letter-spacing:0.1px">Success</div>
<div class="t" style="left:802px;top:329.04px;font-size:12px;line-height:1;color:#222">create ta...</div>
<div class="t" style="left:864px;top:329.04px;font-size:12px;line-height:1;color:#222;letter-spacing:-0.3px">2020. 10....</div>
<div class="t" style="left:928px;top:329.04px;font-size:12px;line-height:1;color:#222;letter-spacing:-0.1px">New Ora...</div>
<svg class="a" style="left:753px;top:346.4px" width="12" height="12"><path d="M1.5 6.5L4.5 10.5L11 1" stroke="#1a1ae6" fill="none" stroke-width="1.8"/></svg>
<div class="t" style="left:768px;top:347.24px;font-size:12px;line-height:1;color:#222;width:29px;overflow:hidden;letter-spacing:0.1px">Success</div>
<div class="t" style="left:802px;top:347.24px;font-size:12px;line-height:1;color:#222">select * f...</div>
<div class="t" style="left:864px;top:347.24px;font-size:12px;line-height:1;color:#222;letter-spacing:-0.3px">2020. 10....</div>
<div class="t" style="left:928px;top:347.24px;font-size:12px;line-height:1;color:#222;letter-spacing:-0.1px">New Ora...</div>
<svg class="a" style="left:753px;top:364.6px" width="12" height="12"><path d="M1.5 6.5L4.5 10.5L11 1" stroke="#1a1ae6" fill="none" stroke-width="1.8"/></svg>
<div class="t" style="left:768px;top:365.44px;font-size:12px;line-height:1;color:#222;width:29px;overflow:hidden;letter-spacing:0.1px">Success</div>
<div class="t" style="left:802px;top:365.44px;font-size:12px;line-height:1;color:#222">select * f...</div>
<div class="t" style="left:864px;top:365.44px;font-size:12px;line-height:1;color:#222;letter-spacing:-0.3px">2020. 10....</div>
<div class="t" style="left:928px;top:365.44px;font-size:12px;line-height:1;color:#222;letter-spacing:-0.1px">New Ora...</div>
<svg class="a" style="left:753px;top:382.8px" width="12" height="12"><path d="M1.5 6.5L4.5 10.5L11 1" stroke="#1a1ae6" fill="none" stroke-width="1.8"/></svg>
<div class="t" style="left:768px;top:383.64px;font-size:12px;line-height:1;color:#222;width:29px;overflow:hidden;letter-spacing:0.1px">Success</div>
<div class="t" style="left:802px;top:383.64px;font-size:12px;line-height:1;color:#222">drop tabl...</div>
<div class="t" style="left:864px;top:383.64px;font-size:12px;line-height:1;color:#222;letter-spacing:-0.3px">2020. 10....</div>
<div class="t" style="left:928px;top:383.64px;font-size:12px;line-height:1;color:#222;letter-spacing:-0.1px">New Ora...</div>
<svg class="a" style="left:753px;top:401.0px" width="12" height="12"><path d="M1.5 6.5L4.5 10.5L11 1" stroke="#1a1ae6" fill="none" stroke-width="1.8"/></svg>
<div class="t" style="left:768px;top:401.84px;font-size:12px;line-height:1;color:#222;width:29px;overflow:hidden;letter-spacing:0.1px">Success</div>
<div class="t" style="left:802px;top:401.84px;font-size:12px;line-height:1;color:#222">select * f...</div>
<div class="t" style="left:864px;top:401.84px;font-size:12px;line-height:1;color:#222;letter-spacing:-0.3px">2020. 10....</div>
<div class="t" style="left:928px;top:401.84px;font-size:12px;line-height:1;color:#222;letter-spacing:-0.1px">New Ora...</div>
<svg class="a" style="left:753px;top:419.2px" width="12" height="12"><path d="M1.5 6.5L4.5 10.5L11 1" stroke="#1a1ae6" fill="none" stroke-width="1.8"/></svg>
<div class="t" style="left:768px;top:420.04px;font-size:12px;line-height:1;color:#222;width:29px;overflow:hidden;letter-spacing:0.1px">Success</div>
<div class="t" style="left:802px;top:420.04px;font-size:12px;line-height:1;color:#222">create ta...</div>
<div class="t" style="left:864px;top:420.04px;font-size:12px;line-height:1;color:#222;letter-spacing:-0.3px">2020. 10....</div>
<div class="t" style="left:928px;top:420.04px;font-size:12px;line-height:1;color:#222;letter-spacing:-0.1px">New Ora...</div>
<svg class="a" style="left:753px;top:437.4px" width="12" height="12"><path d="M1.5 6.5L4.5 10.5L11 1" stroke="#1a1ae6" fill="none" stroke-width="1.8"/></svg>
<div class="t" style="left:768px;top:438.24px;font-size:12px;line-height:1;color:#222;width:29px;overflow:hidden;letter-spacing:0.1px">Success</div>
<div class="t" style="left:802px;top:438.24px;font-size:12px;line-height:1;color:#222">select * f...</div>
<div class="t" style="left:864px;top:438.24px;font-size:12px;line-height:1;color:#222;letter-spacing:-0.3px">2020. 10....</div>
<div class="t" style="left:928px;top:438.24px;font-size:12px;line-height:1;color:#222;letter-spacing:-0.1px">New Ora...</div>
<svg class="a" style="left:739px;top:457.6px" width="6" height="9"><path d="M1 1L5 4.5L1 8" stroke="#999" fill="none" stroke-width="1"/></svg>
<svg class="a" style="left:753px;top:455.6px" width="12" height="12"><path d="M1.5 6.5L4.5 10.5L11 1" stroke="#1a1ae6" fill="none" stroke-width="1.8"/></svg>
<div class="t" style="left:768px;top:456.44px;font-size:12px;line-height:1;color:#222;width:29px;overflow:hidden;letter-spacing:0.1px">Success</div>
<div class="t" style="left:802px;top:456.44px;font-size:12px;line-height:1;color:#222">Group Ex...</div>
<div class="t" style="left:864px;top:456.44px;font-size:12px;line-height:1;color:#222;letter-spacing:-0.3px">2020. 10....</div>
<div class="t" style="left:928px;top:456.44px;font-size:12px;line-height:1;color:#222;letter-spacing:-0.1px">New Ora...</div>
<svg class="a" style="left:753px;top:473.8px" width="12" height="12"><path d="M1.5 6.5L4.5 10.5L11 1" stroke="#1a1ae6" fill="none" stroke-width="1.8"/></svg>
<div class="t" style="left:768px;top:474.64px;font-size:12px;line-height:1;color:#222;width:29px;overflow:hidden;letter-spacing:0.1px">Success</div>
<div class="t" style="left:802px;top:474.64px;font-size:12px;line-height:1;color:#222">select * f...</div>
<div class="t" style="left:864px;top:474.64px;font-size:12px;line-height:1;color:#222;letter-spacing:-0.3px">2020. 10....</div>
<div class="t" style="left:928px;top:474.64px;font-size:12px;line-height:1;color:#222;letter-spacing:-0.1px">New Ora...</div>
<svg class="a" style="left:753px;top:492.0px" width="12" height="12"><path d="M1.5 6.5L4.5 10.5L11 1" stroke="#1a1ae6" fill="none" stroke-width="1.8"/></svg>
<div class="t" style="left:768px;top:492.84px;font-size:12px;line-height:1;color:#222;width:29px;overflow:hidden;letter-spacing:0.1px">Success</div>
<div class="t" style="left:802px;top:492.84px;font-size:12px;line-height:1;color:#222">select * f...</div>
<div class="t" style="left:864px;top:492.84px;font-size:12px;line-height:1;color:#222;letter-spacing:-0.3px">2020. 10....</div>
<div class="t" style="left:928px;top:492.84px;font-size:12px;line-height:1;color:#222;letter-spacing:-0.1px">New Ora...</div>
<svg class="a" style="left:753px;top:510.2px" width="12" height="12"><path d="M1.5 6.5L4.5 10.5L11 1" stroke="#1a1ae6" fill="none" stroke-width="1.8"/></svg>
<div class="t" style="left:768px;top:511.04px;font-size:12px;line-height:1;color:#222;width:29px;overflow:hidden;letter-spacing:0.1px">Success</div>
<div class="t" style="left:802px;top:511.04px;font-size:12px;line-height:1;color:#222">select * f...</div>
<div class="t" style="left:864px;top:511.04px;font-size:12px;line-height:1;color:#222;letter-spacing:-0.3px">2020. 10....</div>
<div class="t" style="left:928px;top:511.04px;font-size:12px;line-height:1;color:#222;letter-spacing:-0.1px">New Ora...</div>
<svg class="a" style="left:753px;top:528.4px" width="12" height="12"><path d="M1.5 6.5L4.5 10.5L11 1" stroke="#1a1ae6" fill="none" stroke-width="1.8"/></svg>
<div class="t" style="left:768px;top:529.24px;font-size:12px;line-height:1;color:#222;width:29px;overflow:hidden;letter-spacing:0.1px">Success</div>
<div class="t" style="left:802px;top:529.24px;font-size:12px;line-height:1;color:#222">select * f...</div>
<div class="t" style="left:864px;top:529.24px;font-size:12px;line-height:1;color:#222;letter-spacing:-0.3px">2020. 10....</div>
<div class="t" style="left:928px;top:529.24px;font-size:12px;line-height:1;color:#222;letter-spacing:-0.1px">New Ora...</div>
<svg class="a" style="left:753px;top:546.6px" width="12" height="12"><path d="M1.5 6.5L4.5 10.5L11 1" stroke="#1a1ae6" fill="none" stroke-width="1.8"/></svg>
<div class="t" style="left:768px;top:547.44px;font-size:12px;line-height:1;color:#222;width:29px;overflow:hidden;letter-spacing:0.1px">Success</div>
<div class="t" style="left:802px;top:547.44px;font-size:12px;line-height:1;color:#222">select * f...</div>
<div class="t" style="left:864px;top:547.44px;font-size:12px;line-height:1;color:#222;letter-spacing:-0.3px">2020. 10....</div>
<div class="t" style="left:928px;top:547.44px;font-size:12px;line-height:1;color:#222;letter-spacing:-0.1px">New Ora...</div>
<svg class="a" style="left:753px;top:564.8px" width="12" height="12"><path d="M1.5 6.5L4.5 10.5L11 1" stroke="#1a1ae6" fill="none" stroke-width="1.8"/></svg>
<div class="t" style="left:768px;top:565.64px;font-size:12px;line-height:1;color:#222;width:29px;overflow:hidden;letter-spacing:0.1px">Success</div>
<div class="t" style="left:802px;top:565.64px;font-size:12px;line-height:1;color:#222">select * f...</div>
<div class="t" style="left:864px;top:565.64px;font-size:12px;line-height:1;color:#222;letter-spacing:-0.3px">2020. 10....</div>
<div class="t" style="left:928px;top:565.64px;font-size:12px;line-height:1;color:#222;letter-spacing:-0.1px">New Ora...</div>
<svg class="a" style="left:739px;top:585.0px" width="6" height="9"><path d="M1 1L5 4.5L1 8" stroke="#999" fill="none" stroke-width="1"/></svg>
<svg class="a" style="left:753px;top:583.0px" width="12" height="12"><path d="M1.5 6.5L4.5 10.5L11 1" stroke="#1a1ae6" fill="none" stroke-width="1.8"/></svg>
<div class="t" style="left:768px;top:583.84px;font-size:12px;line-height:1;color:#222;width:29px;overflow:hidden;letter-spacing:0.1px">Success</div>
<div class="t" style="left:802px;top:583.84px;font-size:12px;line-height:1;color:#222">Group Ex...</div>
<div class="t" style="left:864px;top:583.84px;font-size:12px;line-height:1;color:#222;letter-spacing:-0.3px">2020. 10....</div>
<div class="t" style="left:928px;top:583.84px;font-size:12px;line-height:1;color:#222;letter-spacing:-0.1px">New Ora...</div>
<svg class="a" style="left:753px;top:601.2px" width="12" height="12"><path d="M1.5 6.5L4.5 10.5L11 1" stroke="#1a1ae6" fill="none" stroke-width="1.8"/></svg>
<div class="t" style="left:768px;top:602.04px;font-size:12px;line-height:1;color:#222;width:29px;overflow:hidden;letter-spacing:0.1px">Success</div>
<div class="t" style="left:802px;top:602.04px;font-size:12px;line-height:1;color:#222">select * f...</div>
<div class="t" style="left:864px;top:602.04px;font-size:12px;line-height:1;color:#222;letter-spacing:-0.3px">2020. 10....</div>
<div class="t" style="left:928px;top:602.04px;font-size:12px;line-height:1;color:#222;letter-spacing:-0.1px">New Ora...</div>
<div class="a" style="left:734px;top:617px;width:376px;height:18px;background:#d9d9de"></div>
<svg class="a" style="left:753px;top:619.4px" width="12" height="12"><path d="M1.5 6.5L4.5 10.5L11 1" stroke="#1a1ae6" fill="none" stroke-width="1.8"/></svg>
<div class="t" style="left:768px;top:620.24px;font-size:12px;line-height:1;color:#222;width:29px;overflow:hidden;letter-spacing:0.1px">Success</div>
<div class="t" style="left:802px;top:620.24px;font-size:12px;line-height:1;color:#222">select * f...</div>
<div class="t" style="left:864px;top:620.24px;font-size:12px;line-height:1;color:#222;letter-spacing:-0.3px">2020. 10....</div>
<div class="t" style="left:928px;top:620.24px;font-size:12px;line-height:1;color:#222;letter-spacing:-0.1px">New Ora...</div>
<div class="a" style="left:1110px;top:266px;width:1px;height:20px;background:#7a7a7a"></div>
<div class="a" style="left:1112px;top:284px;width:376px;height:1px;background:#dcdce0"></div>
<div class="a" style="left:1152px;top:265px;width:44px;height:21px;background:#fff;border:1px solid #d0d0d6;border-bottom:none;border-radius:3px 3px 0 0"></div>
<div class="t" style="left:1117px;top:270.34px;font-size:12px;line-height:1;color:#333">Status</div>
<div class="t" style="left:1155px;top:270.34px;font-size:12px;line-height:1;color:#222;letter-spacing:-0.2px">Result1</div>
<div class="t" style="left:1143px;top:291.84px;font-size:12px;line-height:1;color:#333">CODE</div>
<div class="t" style="left:1234px;top:291.84px;font-size:12px;line-height:1;color:#333">NAME</div>
<div class="t" style="left:1327px;top:291.84px;font-size:12px;line-height:1;color:#333">PRICE</div>
<div class="t" style="left:1417px;top:291.84px;font-size:12px;line-height:1;color:#333">MAKER</div>
<div class="a" style="left:1137px;top:288px;width:1px;height:645px;background:#f0f0f5"></div>
<div class="a" style="left:1229px;top:288px;width:1px;height:645px;background:#f0f0f5"></div>
<div class="a" style="left:1321px;top:288px;width:1px;height:645px;background:#f0f0f5"></div>
<div class="a" style="left:1411px;top:288px;width:1px;height:645px;background:#f0f0f5"></div>
<div class="a" style="left:1116px;top:326px;width:372px;height:1px;background:#f3f3f6"></div>
<div class="a" style="left:1116px;top:345px;width:372px;height:1px;background:#f3f3f6"></div>
<div class="a" style="left:1116px;top:364px;width:372px;height:1px;background:#f3f3f6"></div>
<div class="a" style="left:1116px;top:383px;width:372px;height:1px;background:#f3f3f6"></div>
<div class="a" style="left:1116px;top:402px;width:372px;height:1px;background:#f3f3f6"></div>
<div class="a" style="left:1116px;top:421px;width:372px;height:1px;background:#f3f3f6"></div>
<div class="a" style="left:1116px;top:440px;width:372px;height:1px;background:#f3f3f6"></div>
<div class="a" style="left:1116px;top:459px;width:372px;height:1px;background:#f3f3f6"></div>
<div class="a" style="left:1116px;top:478px;width:372px;height:1px;background:#f3f3f6"></div>
<div class="a" style="left:1116px;top:497px;width:372px;height:1px;background:#f3f3f6"></div>
<div class="a" style="left:1116px;top:516px;width:372px;height:1px;background:#f3f3f6"></div>
<div class="a" style="left:1116px;top:535px;width:372px;height:1px;background:#f3f3f6"></div>
<div class="a" style="left:1116px;top:554px;width:372px;height:1px;background:#f3f3f6"></div>
<div class="a" style="left:1116px;top:573px;width:372px;height:1px;background:#f3f3f6"></div>
<div class="a" style="left:1116px;top:592px;width:372px;height:1px;background:#f3f3f6"></div>
<div class="a" style="left:1116px;top:611px;width:372px;height:1px;background:#f3f3f6"></div>
<div class="a" style="left:1116px;top:630px;width:372px;height:1px;background:#f3f3f6"></div>
<div class="a" style="left:1116px;top:649px;width:372px;height:1px;background:#f3f3f6"></div>
<div class="a" style="left:1116px;top:668px;width:372px;height:1px;background:#f3f3f6"></div>
<div class="a" style="left:1116px;top:687px;width:372px;height:1px;background:#f3f3f6"></div>
<div class="a" style="left:1116px;top:706px;width:372px;height:1px;background:#f3f3f6"></div>
<div class="a" style="left:1116px;top:725px;width:372px;height:1px;background:#f3f3f6"></div>
<div class="a" style="left:1116px;top:744px;width:372px;height:1px;background:#f3f3f6"></div>
<div class="a" style="left:1116px;top:763px;width:372px;height:1px;background:#f3f3f6"></div>
<div class="a" style="left:1116px;top:782px;width:372px;height:1px;background:#f3f3f6"></div>
<div class="a" style="left:1116px;top:801px;width:372px;height:1px;background:#f3f3f6"></div>
<div class="a" style="left:1116px;top:820px;width:372px;height:1px;background:#f3f3f6"></div>
<div class="a" style="left:1116px;top:839px;width:372px;height:1px;background:#f3f3f6"></div>
<div class="a" style="left:1116px;top:858px;width:372px;height:1px;background:#f3f3f6"></div>
<div class="a" style="left:1116px;top:877px;width:372px;height:1px;background:#f3f3f6"></div>
<div class="a" style="left:1116px;top:896px;width:372px;height:1px;background:#f3f3f6"></div>
<div class="a" style="left:1116px;top:915px;width:372px;height:1px;background:#f3f3f6"></div>
<div class="a" style="left:1118px;top:307px;width:19px;height:19px;background:#efede5"></div>
<div class="t" style="left:1121px;top:311.64px;font-size:12px;line-height:1;color:#222">1</div>
<div class="t" style="left:1143px;top:311.64px;font-size:12px;line-height:1;color:#222">p0001</div>
<div class="t" style="left:1234px;top:311.64px;font-size:12px;line-height:1;color:#222;width:84px;overflow:hidden">제이쿼리</div>
<div class="t" style="left:1327px;top:311.64px;font-size:12px;line-height:1;color:#222">30000</div>
<div class="t" style="left:1417px;top:311.64px;font-size:12px;line-height:1;color:#222;width:72px;overflow:hidden">한빛미디어</div>
<div class="a" style="left:1118px;top:326px;width:19px;height:19px;background:#efede5"></div>
<div class="t" style="left:1121px;top:330.64px;font-size:12px;line-height:1;color:#222">2</div>
<div class="t" style="left:1143px;top:330.64px;font-size:12px;line-height:1;color:#222">p0002</div>
<div class="t" style="left:1234px;top:330.64px;font-size:12px;line-height:1;color:#222;width:84px;overflow:hidden">JSP 3일완성</div>
<div class="t" style="left:1327px;top:330.64px;font-size:12px;line-height:1;color:#222">30000</div>
<div class="t" style="left:1417px;top:330.64px;font-size:12px;line-height:1;color:#222;width:72px;overflow:hidden">야메루출판사</div>
<div class="a" style="left:1118px;top:345px;width:19px;height:19px;background:#efede5"></div>
<div class="t" style="left:1121px;top:349.64px;font-size:12px;line-height:1;color:#222">3</div>
<div class="t" style="left:1143px;top:349.64px;font-size:12px;line-height:1;color:#222">p0100</div>
<div class="t" style="left:1234px;top:349.64px;font-size:12px;line-height:1;color:#222;width:84px;overflow:hidden">python정복</div>
<div class="t" style="left:1327px;top:349.64px;font-size:12px;line-height:1;color:#222">25000</div>
<div class="t" style="left:1417px;top:349.64px;font-size:12px;line-height:1;color:#222;width:72px;overflow:hidden">혜지원</div>
<div class="a" style="left:1115px;top:364px;width:374px;height:19px;background:#cde5f9"></div>
<div class="t" style="left:1121px;top:368.64px;font-size:12px;line-height:1;color:#222">4</div>
<div class="t" style="left:1143px;top:368.64px;font-size:12px;line-height:1;color:#222">p0005</div>
<div class="t" style="left:1234px;top:368.64px;font-size:12px;line-height:1;color:#222;width:84px;overflow:hidden">자바1주일배...</div>
<div class="t" style="left:1327px;top:368.64px;font-size:12px;line-height:1;color:#222">15000</div>
<div class="t" style="left:1417px;top:368.64px;font-size:12px;line-height:1;color:#222;width:72px;overflow:hidden">인포믹스</div>
<div class="a" style="left:1118px;top:383px;width:19px;height:19px;background:#efede5"></div>
<div class="t" style="left:1121px;top:387.64px;font-size:12px;line-height:1;color:#222">5</div>
<div class="t" style="left:1143px;top:387.64px;font-size:12px;line-height:1;color:#222">p0007</div>
<div class="t" style="left:1234px;top:387.64px;font-size:12px;line-height:1;color:#222;width:84px;overflow:hidden">오라클</div>
<div class="t" style="left:1327px;top:387.64px;font-size:12px;line-height:1;color:#222">55000</div>
<div class="t" style="left:1417px;top:387.64px;font-size:12px;line-height:1;color:#222;width:72px;overflow:hidden">생능출판</div>
<div class="a" style="left:1115px;top:402px;width:374px;height:19px;background:#cde5f9"></div>
<div class="a" style="left:1115px;top:402px;width:374px;height:19px;border:1px dotted #333"></div>
<div class="t" style="left:1121px;top:406.64px;font-size:12px;line-height:1;color:#222">6</div>
<div class="t" style="left:1143px;top:406.64px;font-size:12px;line-height:1;color:#222">p0008</div>
<div class="t" style="left:1234px;top:406.64px;font-size:12px;line-height:1;color:#222;width:84px;overflow:hidden">Ajax</div>
<div class="t" style="left:1327px;top:406.64px;font-size:12px;line-height:1;color:#222">35000</div>
<div class="t" style="left:1417px;top:406.64px;font-size:12px;line-height:1;color:#222;width:72px;overflow:hidden">인포믹스</div>
<div class="a" style="left:1118px;top:421px;width:19px;height:19px;background:#efede5"></div>
<div class="t" style="left:1121px;top:425.64px;font-size:12px;line-height:1;color:#222">7</div>
<div class="t" style="left:1143px;top:425.64px;font-size:12px;line-height:1;color:#222">p0009</div>
<div class="t" style="left:1234px;top:425.64px;font-size:12px;line-height:1;color:#222;width:84px;overflow:hidden">JSP</div>
<div class="t" style="left:1327px;top:425.64px;font-size:12px;line-height:1;color:#222">45000</div>
<div class="t" style="left:1417px;top:425.64px;font-size:12px;line-height:1;color:#222;width:72px;overflow:hidden">인포믹스</div>
<div class="a" style="left:1116px;top:933px;width:372px;height:16px;background:#f0f0f2"></div>
<div class="a" style="left:1131px;top:935px;width:322px;height:12px;background:#cdcdd1"></div>
<svg class="a" style="left:1119px;top:936px" width="8" height="10"><path d="M6 1L2 5L6 9" stroke="#555" fill="none" stroke-width="1.3"/></svg>
<svg class="a" style="left:1477px;top:936px" width="8" height="10"><path d="M2 1L6 5L2 9" stroke="#555" fill="none" stroke-width="1.3"/></svg>
<div class="t" style="left:1115px;top:955.84px;font-size:12px;line-height:1;color:#333">Total 7 records shown</div>
<svg class="a" style="left:1164px;top:687px" width="12" height="18"><path d="M1 1V15L4.5 11.5L7 17L9 16L6.7 10.5H11.5Z" fill="#fff" stroke="#111" stroke-width="1" stroke-linejoin="round"/></svg></div>
<div id="overlay"><div class="a" style="left:10px;top:160px;width:30px;height:30px;border-radius:7px;background:rgba(28,28,28,.88)"></div>
<svg class="a" style="left:15px;top:165px" width="20" height="20"><circle cx="10" cy="10" r="8.2" stroke="#cfcfcf" stroke-width="1.4" fill="none"/><rect x="9.1" y="8.5" width="1.8" height="6.5" fill="#cfcfcf"/><circle cx="10" cy="6" r="1.1" fill="#cfcfcf"/></svg>
<div class="a" style="left:50px;top:160px;width:30px;height:30px;border-radius:7px;background:rgba(28,28,28,.88)"></div>
<svg class="a" style="left:56px;top:165px" width="18" height="20"><path d="M9 0.5L16.5 3.5V9Q16.5 16 9 19.5Q1.5 16 1.5 9V3.5Z" fill="#2fcf55"/><path d="M5 9.5L8 12.5L13 6.5" stroke="#1a1a1a" stroke-width="2" fill="none"/></svg>
<div class="a" style="left:90px;top:160px;width:149px;height:32px;border-radius:4px 0 0 4px;background:rgba(40,40,40,.5)"></div>
<div class="a" style="left:239px;top:160px;width:32px;height:32px;background:rgba(30,30,30,.62)"></div>
<div class="a" style="left:271px;top:160px;width:33px;height:32px;border-radius:0 4px 4px 0;background:rgba(30,30,30,.62)"></div>
<svg class="a" style="left:103px;top:164px" width="24" height="18"><path d="M4 16Q0 16 0 12Q0 8.5 4 8.5Q5 3 11 3Q17 3 18 8Q23 8.5 23 12Q23 16 19 16Z" fill="#d8d8d8"/><circle cx="11.5" cy="11" r="3.3" fill="#f23c3c"/></svg>
<div class="t" style="left:146px;top:165px;font-size:15px;color:#f2f2f2;letter-spacing:1px">기록 중</div>
<div class="a" style="left:250px;top:171px;width:3px;height:10px;background:#fff"></div><div class="a" style="left:256px;top:171px;width:3px;height:10px;background:#fff"></div>
<div class="a" style="left:284px;top:171px;width:10px;height:10px;background:#fff"></div></div>
<div id="zbar" class="a">
  <!-- mic -->
  <svg class="a" style="left:40px;top:7px" width="36" height="32" viewBox="0 0 36 32">
    <rect x="13" y="1" width="10" height="18" rx="5" fill="#a8a8a8"/>
    <path d="M9 14 Q9 23 18 23 Q27 23 27 14" stroke="#a8a8a8" stroke-width="2" fill="none"/>
    <path d="M18 23 V29 M13 29.5 H23" stroke="#a8a8a8" stroke-width="2"/>
    <path d="M3.5 29.5 L32.5 1" stroke="#e8484e" stroke-width="2"/>
  </svg>
  <svg class="a" style="left:91px;top:18px" width="12" height="8"><path d="M1.5 6.5L6 2L10.5 6.5" stroke="#b8b8b8" stroke-width="1.6" fill="none"/></svg>
  <div class="t" style="left:58px;top:43px;transform:translateX(-50%);font-size:15px;color:#d6d6d6">음소거 해제</div>
  <!-- video -->
  <svg class="a" style="left:157px;top:7px" width="34" height="32" viewBox="0 0 34 32">
    <rect x="2" y="6.5" width="21" height="18" rx="3" fill="#a8a8a8"/>
    <path d="M23 12 L32 7 V24 L23 19 Z" fill="#a8a8a8"/>
    <path d="M2.5 29.5 L31 1" stroke="#e8484e" stroke-width="2"/>
  </svg>
  <svg class="a" style="left:214px;top:18px" width="12" height="8"><path d="M1.5 6.5L6 2L10.5 6.5" stroke="#b8b8b8" stroke-width="1.6" fill="none"/></svg>
  <div class="t" style="left:174px;top:43px;transform:translateX(-50%);font-size:15px;color:#d6d6d6">비디오 시작</div>
  <!-- participants -->
  <svg class="a" style="left:459px;top:11px" width="32" height="24" viewBox="0 0 32 24">
    <circle cx="11" cy="6" r="5" fill="#a8a8a8"/><path d="M0 22 Q0 13 11 13 Q22 13 22 22 Z" fill="#a8a8a8"/>
    <circle cx="23" cy="8" r="4" fill="#a8a8a8"/><path d="M17 14.5 Q23 13 27 14.5 Q31 16 31 22 H24 Q24 17 17 14.5Z" fill="#a8a8a8"/>
  </svg>
  <div class="t" style="left:497px;top:12px;font-size:15px;color:#d6d6d6">32</div>
  <svg class="a" style="left:536px;top:18px" width="12" height="8"><path d="M1.5 6.5L6 2L10.5 6.5" stroke="#b8b8b8" stroke-width="1.6" fill="none"/></svg>
  <div class="t" style="left:476px;top:43px;transform:translateX(-50%);font-size:15px;color:#d6d6d6">참가자</div>
  <!-- Q&A -->
  <svg class="a" style="left:592px;top:11px" width="32" height="24" viewBox="0 0 32 24">
    <rect x="12" y="0.5" width="19" height="13" rx="4" fill="#a8a8a8"/><path d="M26 13 L29 17 L28 12Z" fill="#a8a8a8"/>
    <rect x="0.5" y="5.5" width="19" height="14" rx="4" fill="#a8a8a8" stroke="#1a1a1a" stroke-width="1.5"/><path d="M3 19 L4 23.5 L8 19Z" fill="#a8a8a8"/>
  </svg>
  <div class="t" style="left:607px;top:43px;transform:translateX(-50%);font-size:14.5px;color:#d6d6d6;font-weight:bold">Q&amp;A</div>
  <!-- poll -->
  <svg class="a" style="left:695px;top:11px" width="26" height="24"><rect x="1" y="13" width="6" height="10" rx="1.2" fill="#a8a8a8"/><rect x="10" y="1" width="6" height="22" rx="1.2" fill="#a8a8a8"/><rect x="19" y="8" width="6" height="15" rx="1.2" fill="#a8a8a8"/></svg>
  <div class="t" style="left:708px;top:43px;transform:translateX(-50%);font-size:15px;color:#d6d6d6">설문조사</div>
  <!-- chat -->
  <svg class="a" style="left:794px;top:11px" width="28" height="24"><rect x="1" y="1" width="26" height="17" rx="5" fill="#a8a8a8"/><path d="M7 17 L8 23.5 L14 17Z" fill="#a8a8a8"/></svg>
  <div class="t" style="left:808px;top:43px;transform:translateX(-50%);font-size:15px;color:#d6d6d6">채팅</div>
  <!-- share -->
  <div class="a" style="left:904px;top:12px;width:30px;height:22px;border-radius:4px;background:#22d55a"></div>
  <svg class="a" style="left:912px;top:15px" width="14" height="16"><path d="M7 14 V3 M2.5 7.5 L7 3 L11.5 7.5" stroke="#1a1a1a" stroke-width="2.2" fill="none"/></svg>
  <svg class="a" style="left:959px;top:18px" width="12" height="8"><path d="M1.5 6.5L6 2L10.5 6.5" stroke="#b8b8b8" stroke-width="1.6" fill="none"/></svg>
  <div class="t" style="left:918px;top:43px;transform:translateX(-50%);font-size:15px;color:#3ad55e">화면 공유</div>
  <!-- record pause/stop -->
  <div class="a" style="left:1029px;top:7px;width:25px;height:25px;border-radius:3px;background:#a5a5a5"></div>
  <div class="a" style="left:1036px;top:13px;width:4px;height:12px;background:#1a1a1a"></div>
  <div class="a" style="left:1043px;top:13px;width:4px;height:12px;background:#1a1a1a"></div>
  <div class="a" style="left:1062px;top:7px;width:25px;height:25px;border-radius:3px;background:#a5a5a5"></div>
  <div class="a" style="left:1068px;top:13px;width:13px;height:13px;background:#1a1a1a"></div>
  <div class="t" style="left:1058px;top:43px;transform:translateX(-50%);font-size:15px;color:#d6d6d6">기록 일시 중지/중지</div>
  <!-- more -->
  <svg class="a" style="left:1171px;top:18px" width="28" height="8"><circle cx="4" cy="4" r="2.6" fill="#c0c0c0"/><circle cx="14" cy="4" r="2.6" fill="#c0c0c0"/><circle cx="24" cy="4" r="2.6" fill="#c0c0c0"/></svg>
  <div class="t" style="left:1184px;top:43px;transform:translateX(-50%);font-size:15px;color:#d6d6d6">더 보기</div>
  <!-- end -->
  <div class="a" style="left:1428px;top:17px;width:77px;height:33px;border-radius:8px;background:#bd2227"></div>
  <div class="t" style="left:1466px;top:23px;transform:translateX(-50%);font-size:16px;color:#fff;font-weight:bold">종료</div>
</div>
<div id="rp" class="a">
  <svg class="a" style="left:24px;top:25px" width="12" height="8"><path d="M1.5 1.5L6 6L10.5 1.5" stroke="#4a4a5a" stroke-width="1.6" fill="none"/></svg>
  <div class="t" style="left:200px;top:19px;transform:translateX(-50%);font-size:16px;font-weight:bold;color:#232333">참가자(32)</div>
  <div class="a" style="left:29px;top:63px;width:342px;height:31px;border-radius:8px;background:#f1f1f6"></div>
  <div class="a" style="left:201px;top:64px;width:169px;height:28px;border-radius:7px;background:#fff;box-shadow:0 1px 2px rgba(0,0,0,.08)"></div>
  <div class="t" style="left:113px;top:71px;transform:translateX(-50%);font-size:14px;font-weight:bold;color:#4a4a5a">토론자(5)</div>
  <div class="t" style="left:286px;top:71px;transform:translateX(-50%);font-size:14px;font-weight:bold;color:#0e72ed">참석자(27)</div>
  <div class="a" style="left:24px;top:119px;width:355px;height:40px;border-radius:10px;border:1.5px solid #c6c4d8;background:#fff"></div>
  <svg class="a" style="left:38px;top:131px" width="18" height="18"><circle cx="7.5" cy="7.5" r="5.8" stroke="#4a4a5a" stroke-width="1.6" fill="none"/><path d="M11.8 11.8L16 16" stroke="#4a4a5a" stroke-width="1.8"/></svg>
  <div class="t" style="left:59px;top:128px;font-size:16px;color:#6e6e7e">검색</div>
  <div class="a" style="left:36px;top:170px;width:34px;height:33px;border-radius:8px;background:#26a85b"></div>
  <div class="t" style="left:53px;top:177px;transform:translateX(-50%);font-size:15px;color:#fff;font-weight:bold">소</div>
  <div class="a" style="left:36px;top:220px;width:34px;height:26px;overflow:hidden">
    <div class="a" style="left:0;top:0;width:34px;height:33px;border-radius:8px;background:#f09b14"></div>
    <div class="t" style="left:17px;top:6px;transform:translateX(-50%);font-size:15px;color:#fff;font-weight:bold">신</div>
  </div>
  <div class="a" style="left:387px;top:162px;width:8px;height:84px;border-radius:4px 0 0 4px;background:#f3f3f7"></div>
  <div class="a" style="left:387px;top:199px;width:8px;height:10px;border-radius:5px 0 0 5px;background:#a9a9b3"></div>
  <div class="a" style="left:142px;top:268px;width:117px;height:29px;border-radius:8px;background:#f2f2f6"></div>
  <div class="t" style="left:200px;top:272px;transform:translateX(-50%);font-size:16px;color:#b6b6c2">모든 손 내리기</div>
  <div class="a" style="left:26px;top:315px;width:369px;height:1px;background:#e6e6ee"></div>
  <svg class="a" style="left:24px;top:340px" width="12" height="8"><path d="M1.5 1.5L6 6L10.5 1.5" stroke="#4a4a5a" stroke-width="1.6" fill="none"/></svg>
  <div class="t" style="left:200px;top:333px;transform:translateX(-50%);font-size:16px;font-weight:bold;color:#232333">채팅</div>
  <!-- chat scroll -->
  <div class="a" style="left:387px;top:373px;width:8px;height:520px;border-radius:4px 0 0 4px;background:#f3f3f7"></div>
  <div class="a" style="left:387px;top:722px;width:8px;height:170px;border-radius:4px 0 0 4px;background:#acacb6"></div>
  <div id="chat"><div class="t" style="left:24px;top:385.5px;font-size:14.8px;line-height:1"><span style="color:#6e6e7e">발신자</span><span style="color:#0e72ed">마소캠퍼스 TA</span><span style="color:#6e6e7e">수신자</span><span style="color:#0e72ed">모든 토론자 및 참석자:</span></div>
<div class="t" style="left:24px;top:413.8px;font-size:18px;line-height:1;color:#35353f">mybatis는 ibatis를 이용하여 만든것이</div>
<div class="t" style="left:24px;top:447.8px;font-size:18px;line-height:1;color:#35353f">기에 ibatis의 패키지를 그대로 사용합</div>
<div class="t" style="left:24px;top:480.8px;font-size:18px;line-height:1;color:#35353f">니다!</div>
<div class="t" style="left:24px;top:513.8px;font-size:18px;line-height:1;color:#35353f">p가 없으면 namespace에서 추가해주시</div>
<div class="t" style="left:24px;top:546.8px;font-size:18px;line-height:1;color:#35353f">기 바랍니다</div>
<div class="t" style="left:24px;top:580.3px;font-size:18px;line-height:1;color:#35353f">transaction처리</div>
<div class="t" style="left:24px;top:614.3px;font-size:18px;line-height:1;color:#35353f">일의 시작과 마무리가 성공->commit</div>
<div class="t" style="left:24px;top:648.3px;font-size:18px;line-height:1;color:#35353f">실패->rollback</div>
<div class="t" style="left:24px;top:680.3px;font-size:18px;line-height:1;color:#35353f">쿼리문만 대문자로 바꿔주시기 바랍니</div>
<div class="t" style="left:24px;top:713.8px;font-size:18px;line-height:1;color:#35353f">다!</div>
<div class="t" style="left:24px;top:746.8px;font-size:18px;line-height:1;color:#35353f">JdbcExample 4번 파일입니다</div>
<div class="t" style="left:24px;top:791.5px;font-size:14.8px;line-height:1"><span style="color:#6e6e7e">발신자</span><span style="color:#0e72ed">마소캠퍼스 TA</span><span style="color:#6e6e7e">수신자</span><span style="color:#0e72ed">모든 토론자 및 참석자:</span></div>
<div class="t" style="left:24px;top:818.8px;font-size:18px;line-height:1;color:#35353f">여러건의 데이털 - selectList</div>
<div class="t" style="left:24px;top:851.8px;font-size:18px;line-height:1;color:#35353f">한 건의 데이터 - selectOne</div></div>
  <div class="a" style="left:0;top:895px;width:395px;height:1px;background:#e6e6ee"></div>
  <div class="t" style="left:22px;top:916px;font-size:15px;color:#4a4a5a">받는 사람:</div>
  <div class="a" style="left:99px;top:912px;width:172px;height:29px;border-radius:7px;background:#f1f1f6"></div>
  <div class="t" style="left:108px;top:916px;font-size:14px;color:#232333">모든 토론자 및 참석자</div>
  <svg class="a" style="left:250px;top:922px" width="12" height="9"><path d="M1.5 1.5L6 6.5L10.5 1.5" stroke="#232333" stroke-width="2" fill="none"/></svg>
  <div class="a" style="left:352px;top:911px;width:29px;height:29px;border-radius:7px;border:1px solid #dcdce4;background:#fff"></div>
  <svg class="a" style="left:358px;top:923px" width="18" height="5"><circle cx="3" cy="2.5" r="1.4" fill="#4a4a5a"/><circle cx="9" cy="2.5" r="1.4" fill="#4a4a5a"/><circle cx="15" cy="2.5" r="1.4" fill="#4a4a5a"/></svg>
  <div class="t" style="left:22px;top:950px;font-size:15.5px;color:#6e6e7e">여기에 메시지 입력...</div>
</div>
</body></html>
